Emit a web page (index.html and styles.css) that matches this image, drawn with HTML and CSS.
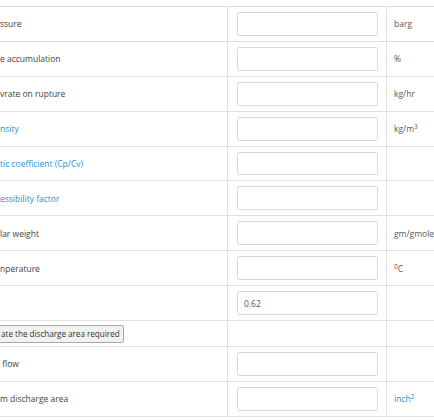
FILE: index.html
```html
<!DOCTYPE html>
<html>
<head>
<meta charset="utf-8">
<link rel="stylesheet" href="styles.css">
</head>
<body>
<div class="wrap">
<table class="calc">
  <tr><td class="lbl">ssure</td><td class="inp"><input class="field" type="text"></td><td class="unit">barg</td></tr>
  <tr><td class="lbl">e accumulation</td><td class="inp"><input class="field" type="text"></td><td class="unit">%</td></tr>
  <tr><td class="lbl">vrate on rupture</td><td class="inp"><input class="field" type="text"></td><td class="unit">kg/hr</td></tr>
  <tr><td class="lbl link">nsity</td><td class="inp"><input class="field" type="text"></td><td class="unit">kg/m<sup>3</sup></td></tr>
  <tr><td class="lbl link">tic coefficient (Cp/Cv)</td><td class="inp"><input class="field" type="text"></td><td class="unit"></td></tr>
  <tr><td class="lbl link">essibility factor</td><td class="inp"><input class="field" type="text"></td><td class="unit"></td></tr>
  <tr><td class="lbl">lar weight</td><td class="inp"><input class="field" type="text"></td><td class="unit">gm/gmole</td></tr>
  <tr><td class="lbl">nperature</td><td class="inp"><input class="field" type="text"></td><td class="unit"><sup>0</sup>C</td></tr>
  <tr><td class="lbl"></td><td class="inp"><input class="field" type="text" value="0.62"></td><td class="unit"></td></tr>
  <tr class="btnrow"><td class="lbl"><button class="calc-btn" type="button">ate the discharge area required</button></td><td class="inp"></td><td class="unit"></td></tr>
  <tr><td class="lbl">&nbsp;flow</td><td class="inp"><input class="field" type="text"></td><td class="unit"></td></tr>
  <tr><td class="lbl">m discharge area</td><td class="inp"><input class="field" type="text"></td><td class="unit link">inch<sup>2</sup></td></tr>
</table>
</div>
</body>
</html>
```
FILE: styles.css
```css
html, body {
  margin: 0;
  padding: 0;
  background: #fff;
}
body {
  width: 434px;
  height: 420px;
  overflow: hidden;
  font-family: "Open Sans", "Liberation Sans", sans-serif;
  font-size: 8.5px;
  color: #444;
}
.wrap {
  padding-top: 6px;
  width: 434px;
  overflow: hidden;
}
.calc {
  border-collapse: collapse;
  width: 470px;
  table-layout: fixed;
}
.calc td {
  border-top: 1px solid #e0e0e0;
  border-bottom: 1px solid #e0e0e0;
  padding: 5px 0;
  height: 23.9px;
  vertical-align: middle;
  white-space: nowrap;
}
.calc td.lbl {
  width: 227px;
  padding-left: 0;
  overflow: hidden;
}
.calc td.inp {
  width: 141px;
  padding-left: 9px;
  padding-right: 8px;
  border-left: 1px solid #e0e0e0;
  border-right: 1px solid #e0e0e0;
}
.calc td.unit {
  padding-left: 7px;
  color: #5a5a5a;
}
.link, .calc td.unit.link {
  color: #2e8fc4;
}
.field {
  display: block;
  box-sizing: border-box;
  width: 141px;
  height: 23.9px;
  margin: 0;
  border: 1px solid #dadada;
  border-radius: 2px;
  padding: 0 6px;
  font-family: "Open Sans", "Liberation Sans", sans-serif;
  font-size: 8.5px;
  color: #555;
  background: #fff;
}
sup {
  font-size: 6.5px;
  line-height: 0;
  vertical-align: 3px;
}
.btnrow td {
  height: 18px;
  padding-top: 3.5px;
  padding-bottom: 3.5px;
}
.calc-btn {
  display: block;
  box-sizing: border-box;
  height: 18px;
  margin: 0 0 0 -5px;
  padding: 0 3px 0 5px;
  border: 1px solid #a8a8a8;
  border-radius: 2px;
  background: #f2f2f2;
  font-family: "Open Sans", "Liberation Sans", sans-serif;
  font-size: 8.1px;
  color: #333;
  white-space: nowrap;
}
```
